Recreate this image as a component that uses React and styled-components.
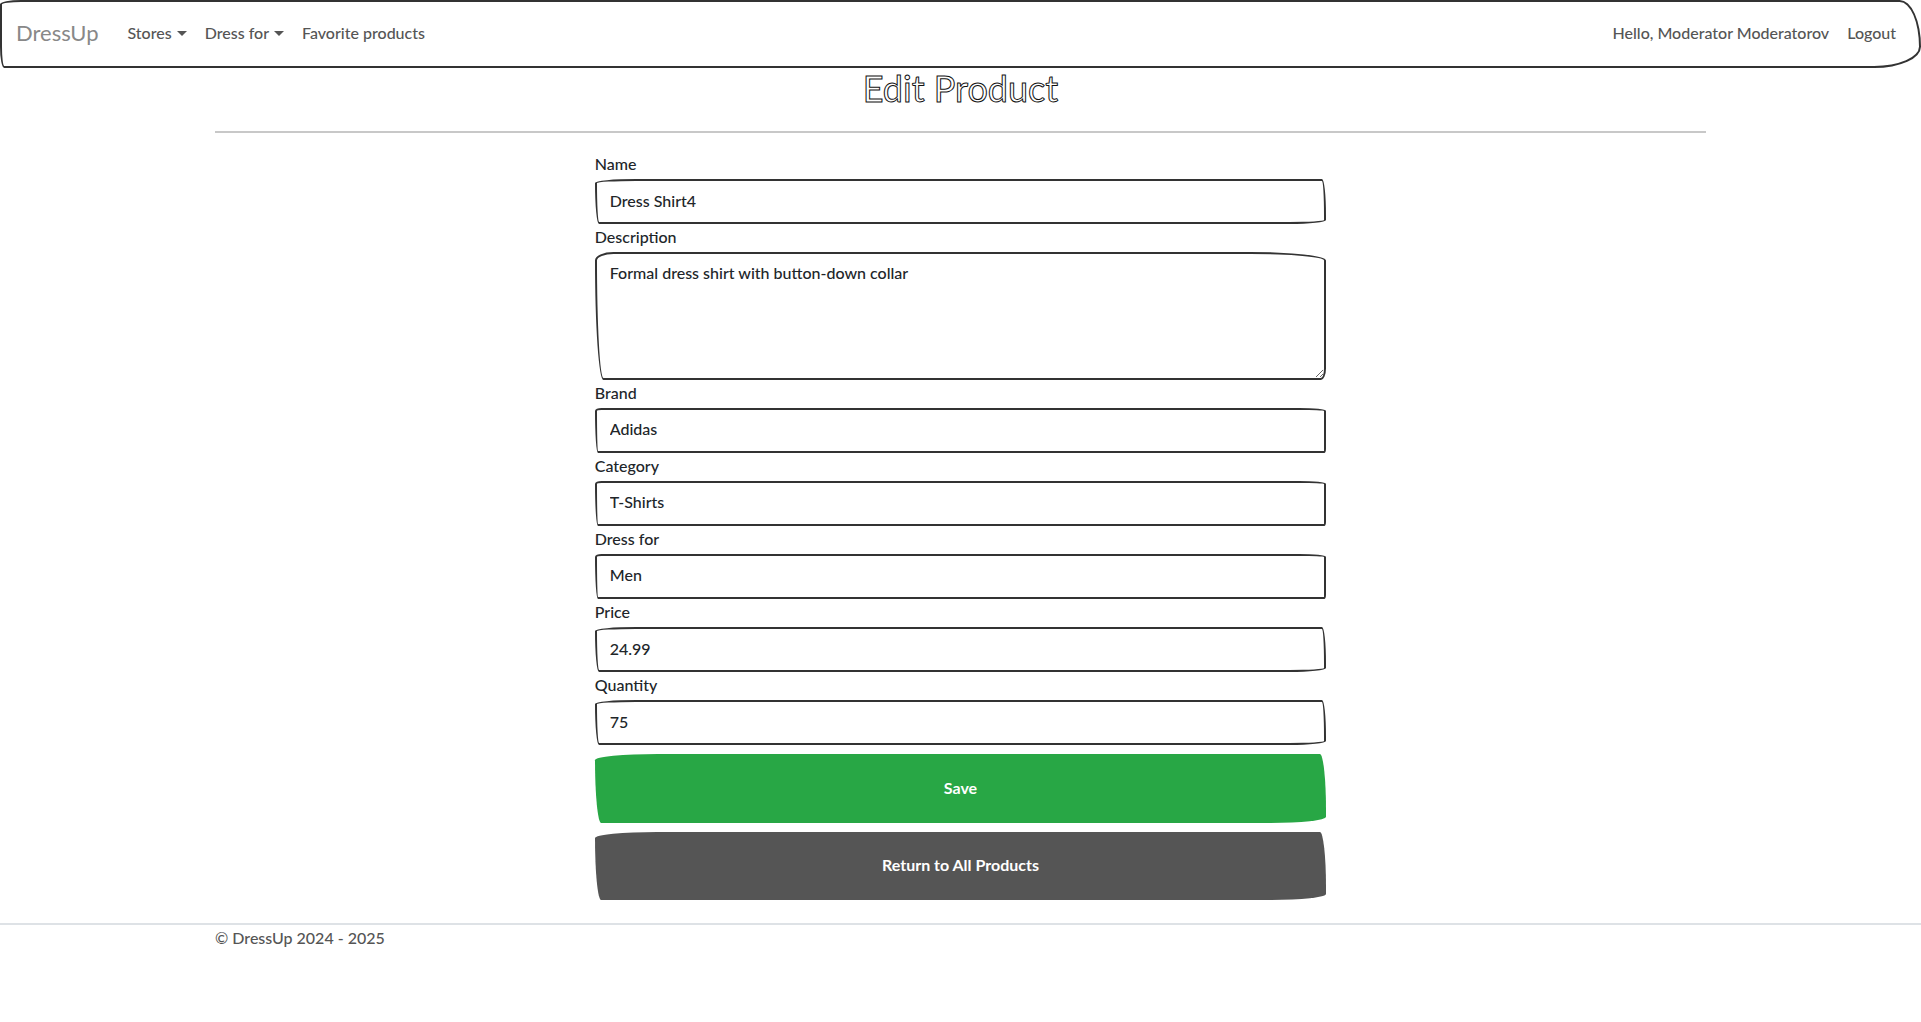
import React, { useState } from "react";
import styled, { createGlobalStyle } from "styled-components";

const GlobalStyle = createGlobalStyle`
  *, *::before, *::after { box-sizing: border-box; }
  body {
    margin: 0;
    background: #fff;
    color: #212529;
    font: 500 16px/26px "Lato", "Open Sans", sans-serif;
  }
`;

const Navbar = styled.nav`
  display: flex;
  align-items: center;
  height: 68px;
  padding: 0 14px 2px;
  border: 2px solid #333;
  border-radius: 25px 25px 55px 5px / 5px 55px 25px 25px;
`;

const Brand = styled.a`
  margin-right: 20px;
  font-size: 22px;
  font-weight: 400;
  line-height: 32px;
  color: #888;
  text-decoration: none;
`;

const NavList = styled.ul`
  display: flex;
  margin: 0;
  padding: 0;
  list-style: none;

  & + & { margin-left: auto; }
`;

const NavLink = styled.a`
  display: flex;
  align-items: center;
  gap: 5px;
  padding: 8px 9px;
  color: #555;
  text-decoration: none;
`;

const Caret = styled.span`
  border-top: 5px solid;
  border-left: 5px solid transparent;
  border-right: 5px solid transparent;
`;

const Container = styled.div`
  width: 100%;
  max-width: 1515px;
  margin: 0 auto;
  padding: 0 12px;
`;

const Title = styled.h1`
  margin: 0;
  font-size: 36px;
  font-weight: 400;
  line-height: 40px;
  color: #fff;
  -webkit-text-stroke: 1px #111;
  text-align: center;
`;

const Divider = styled.hr`
  margin: 23px 0 18px;
  border: 0;
  border-top: 2px solid #c8c8c8;
`;

const Form = styled.form`
  display: flex;
  flex-direction: column;
  width: 50%;
  min-width: 320px;
  margin: 0 auto;
  padding: 0 7px;
`;

const Field = styled.div`
  display: flex;
  flex-direction: column;
`;

const Label = styled.label`
  height: 28px;
`;

const Input = styled.input`
  width: 100%;
  height: 45px;
  padding: 6px 13px 9px;
  border: 2px solid #333;
  border-radius: ${(p) => p.$shape};
  background: #fff;
  color: inherit;
  font: inherit;
`;

const wobble = "255px 25px 225px 25px / 25px 225px 25px 255px";
const wobbleLow = "55px 225px 15px 25px / 25px 25px 35px 355px";

const TextInput = styled(Input).attrs({ $shape: wobble })``;

const Select = styled(Input).attrs({ as: "select", $shape: wobbleLow })`
  appearance: none;
`;

const TextArea = styled(Input).attrs({ as: "textarea", $shape: wobbleLow })`
  height: 128px;
  resize: vertical;
`;

const Button = styled.button`
  height: ${(p) => (p.$tone === "success" ? "69px" : "68px")};
  margin-top: 9px;
  padding: 0 12px 2px;
  border: 0;
  border-radius: ${wobble};
  background: ${(p) => (p.$tone === "success" ? "#28a745" : "#555")};
  color: #fff;
  font: inherit;
  font-weight: 700;
  cursor: pointer;
`;

const Footer = styled.footer`
  margin-top: 23px;
  border-top: 2px solid #dee2e6;
  color: #555;
`;

const menus = [
  { label: "Stores", dropdown: true },
  { label: "Dress for", dropdown: true },
  { label: "Favorite products" },
];

const fields = [
  { id: "name", label: "Name", control: TextInput },
  { id: "description", label: "Description", control: TextArea },
  { id: "brand", label: "Brand", control: Select, options: ["Adidas"] },
  { id: "category", label: "Category", control: Select, options: ["T-Shirts"] },
  { id: "dressFor", label: "Dress for", control: Select, options: ["Men"] },
  { id: "price", label: "Price", control: TextInput },
  { id: "quantity", label: "Quantity", control: TextInput },
];

export default function App() {
  const [product, setProduct] = useState({
    name: "Dress Shirt4",
    description: "Formal dress shirt with button-down collar",
    brand: "Adidas",
    category: "T-Shirts",
    dressFor: "Men",
    price: "24.99",
    quantity: "75",
  });

  return (
    <>
      <GlobalStyle />
      <Navbar>
        <Brand href="#">DressUp</Brand>
        <NavList>
          {menus.map((m) => (
            <li key={m.label}>
              <NavLink href="#">
                {m.label}
                {m.dropdown && <Caret />}
              </NavLink>
            </li>
          ))}
        </NavList>
        <NavList>
          <li><NavLink href="#">Hello, Moderator Moderatorov</NavLink></li>
          <li><NavLink href="#">Logout</NavLink></li>
        </NavList>
      </Navbar>
      <Container as="main">
        <Title>Edit Product</Title>
        <Divider />
        <Form onSubmit={(e) => e.preventDefault()}>
          {fields.map(({ id, label, control: Control, options }) => (
            <Field key={id}>
              <Label htmlFor={id}>{label}</Label>
              <Control
                id={id}
                value={product[id]}
                onChange={(e) => setProduct({ ...product, [id]: e.target.value })}
              >
                {options && options.map((o) => <option key={o}>{o}</option>)}
              </Control>
            </Field>
          ))}
          <Button type="submit" $tone="success">Save</Button>
          <Button type="button">Return to All Products</Button>
        </Form>
      </Container>
      <Footer>
        <Container>© DressUp 2024 - 2025</Container>
      </Footer>
    </>
  );
}
